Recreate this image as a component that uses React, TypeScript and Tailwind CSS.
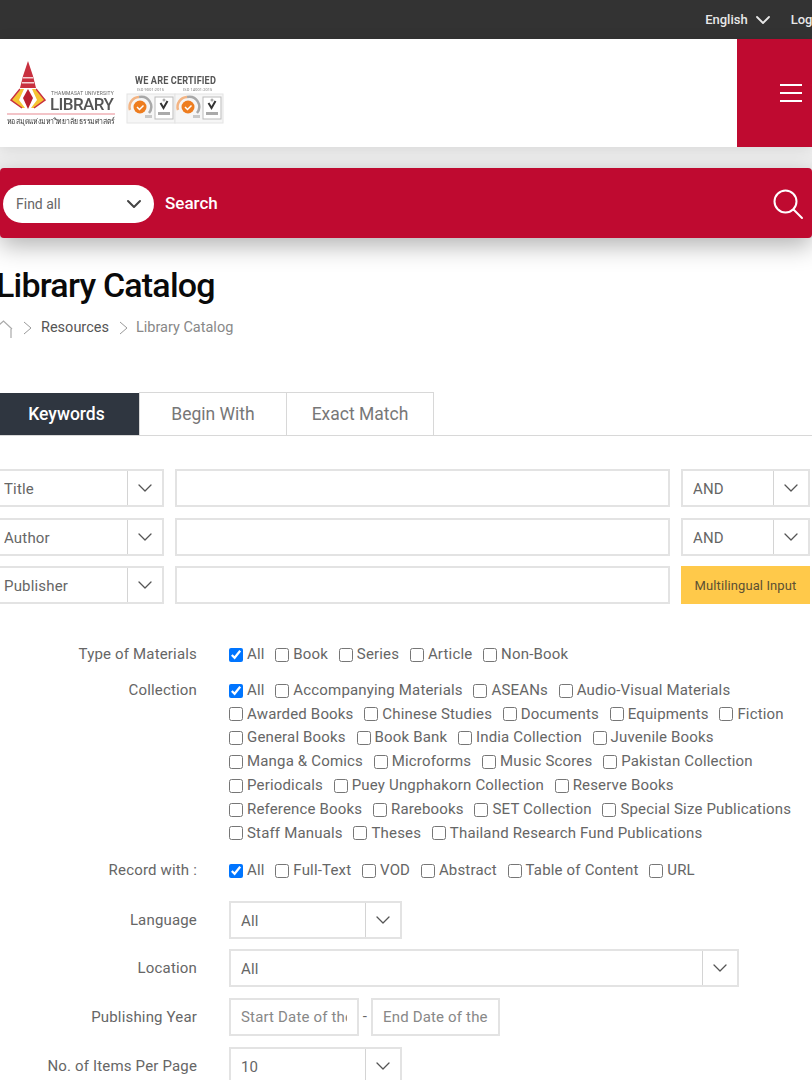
import { ChevronDown } from "lucide-react"

const TYPES = ["Book", "Series", "Article", "Non-Book"]
const RECORDS = ["Full-Text", "VOD", "Abstract", "Table of Content", "URL"]
const COLLECTIONS = [
  ["Awarded Books", "Chinese Studies", "Documents", "Equipments", "Fiction"],
  ["General Books", "Book Bank", "India Collection", "Juvenile Books"],
  ["Manga & Comics", "Microforms", "Music Scores", "Pakistan Collection"],
  ["Periodicals", "Puey Ungphakorn Collection", "Reserve Books"],
  ["Reference Books", "Rarebooks", "SET Collection", "Special Size Publications"],
  ["Staff Manuals", "Theses", "Thailand Research Fund Publications"],
]

function Check({ label, checked = false }: { label: string; checked?: boolean }) {
  return (
    <label className="flex items-center gap-[4px] whitespace-nowrap">
      <input type="checkbox" defaultChecked={checked} className="m-0 h-[14px] w-[14px] accent-[#0075ff]" />
      {label}
    </label>
  )
}

function Select({ label, className }: { label: string; className: string }) {
  return (
    <div className={`flex h-[38px] border-2 border-[#e3e3e3] bg-white ${className}`}>
      <span className="flex-1 truncate pt-[1px] leading-[34px]">{label}</span>
      <span className="flex w-[35px] items-center justify-center border-l border-[#d4d4d4]">
        <ChevronDown className="size-[24px] text-[#555]" strokeWidth={1.3} />
      </span>
    </div>
  )
}

function Badge({ x }: { x: number }) {
  return (
    <g transform={`translate(${x} 0)`}>
      <rect x="0" y="34" width="48" height="29" fill="#f6f6f6" stroke="#e4e4e4" />
      <path d="M12 37a10 10 0 0 1 10 16" fill="none" stroke="#a8a8a8" strokeWidth="2.500" />
      <path d="M12 37a10 10 0 0 0-9 13" fill="none" stroke="#f3b483" strokeWidth="2.500" />
      <circle cx="13" cy="47" r="6.500" fill="#ee7d1f" />
      <path d="M10 47l2.500 2.500 4-4" fill="none" stroke="#fff" strokeWidth="1.500" />
      <rect x="18" y="55" width="7" height="3" fill="#c9c9c9" />
      <rect x="28" y="37" width="18" height="22" fill="#fff" stroke="#bbb" />
      <circle cx="37" cy="40" r="1.500" fill="#aaa" />
      <path d="M33.500 43l3 5 4-7" fill="none" stroke="#333" strokeWidth="2" />
      <rect x="31" y="52" width="12" height="3" fill="#aaa" />
    </g>
  )
}

function Logo() {
  return (
    <svg width="228" height="70" viewBox="0 0 228 70" className="blur-[0.3px]">
      <path d="M28 1l5 15 2 8 1 4H20l1-4 2-8z" fill="#c8303f" />
      <path d="M23 17h10v1.500H23zM22 22h12v1.500H22z" fill="#f4d0d3" />
      <path d="M21 29L11 40l11 8h3l-6-8 5-11z" fill="#f6c431" />
      <path d="M35 29l10 11-11 8h-3l6-8-5-11z" fill="#f6c431" />
      <path d="M20 29L11 40l11 8M36 29l9 11-11 8" fill="none" stroke="#c8303f" strokeWidth="1.500" />
      <path d="M28 29l5 9-5 11-5-11z" fill="#b9202f" />
      <text x="51" y="35" fontSize="4.500" fill="#666" textLength="63" lengthAdjust="spacingAndGlyphs">THAMMASAT UNIVERSITY</text>
      <text x="50" y="50" fontSize="17" fontWeight="500" fill="#555" textLength="64">LIBRARY</text>
      <rect x="7" y="53" width="108" height="2" fill="#f3c4c8" />
      <text x="7" y="64" fontSize="8" fill="#333" textLength="108" lengthAdjust="spacingAndGlyphs">หอสมุดแห่งมหาวิทยาลัยธรรมศาสตร์</text>
      <text x="135" y="24" fontSize="10.500" fontWeight="700" fill="#555" textLength="81" lengthAdjust="spacingAndGlyphs">WE ARE CERTIFIED</text>
      <text x="137" y="31" fontSize="3.800" fill="#777">ISO 9001:2015</text>
      <text x="183" y="31" fontSize="3.800" fill="#777">ISO 14001:2015</text>
      <Badge x={127} />
      <Badge x={175} />
    </svg>
  )
}

function Row({ label, children, className = "", labelClass = "" }: { label: string; children: React.ReactNode; className?: string; labelClass?: string }) {
  return (
    <div className={`flex ${className}`}>
      <div className={`w-[197px] shrink-0 text-right ${labelClass}`}>{label}</div>
      <div className="ml-[32px] flex-1">{children}</div>
    </div>
  )
}

export default function App() {
  return (
    <div className="h-[1080px] w-[812px] overflow-hidden bg-white font-['Roboto',sans-serif] text-[15px] tracking-[0.17px] text-[#666]">
      {/* Top bar */}
      <div className="-mr-[11px] flex h-[39px] items-center justify-end gap-[16px] bg-[#333333] text-[13px] font-medium tracking-normal text-[#e8e8e8]">
        <span className="flex items-center gap-[3px]">
          English
          <ChevronDown className="size-[24px]" strokeWidth={1.8} />
        </span>
        <span>Login</span>
      </div>

      {/* Header */}
      <header className="relative z-10 flex h-[108px] items-center justify-between bg-white shadow-[0_2px_14px_rgba(0,0,0,0.1)]">
        <div className="mt-[4px]">
          <Logo />
        </div>
        <button className="flex h-full w-[75px] items-center justify-end bg-[#bf0a30] pr-[10px]">
          <span className="flex w-[22px] flex-col gap-[6px]">
            <span className="h-[2px] bg-white" />
            <span className="h-[2px] bg-white" />
            <span className="h-[2px] bg-white" />
          </span>
        </button>
      </header>

      {/* Search bar */}
      <div className="bg-[#eeeeee] pt-[21px]">
        <div className="relative z-[5] flex h-[70px] items-center justify-between rounded-[4px] bg-[#bf0a30] pl-[3px] pr-[8px] pt-[2px] tracking-normal shadow-[0_8px_24px_rgba(0,0,0,0.3)]">
          <div className="flex items-center">
            <div className="flex h-[38px] w-[151px] items-center justify-between rounded-full bg-white pl-[13px] pr-[8px] text-[14px] text-[#666]">
              Find all
              <ChevronDown className="size-[24px] text-[#444]" strokeWidth={2} />
            </div>
            <span className="-mt-[1px] ml-[11px] text-[17px] font-medium text-white">Search</span>
          </div>
          <svg width="32" height="32" viewBox="0 0 32 32" fill="none" stroke="white" strokeWidth="2">
            <circle cx="13.500" cy="13.500" r="11" />
            <path d="M21.500 21.500l8.500 8.500" strokeLinecap="round" />
          </svg>
        </div>
      </div>

      {/* Title */}
      <h1 className="-ml-[4px] mt-[25px] text-[34px] font-medium leading-[44px] tracking-[-0.8px] text-[#0a0a0a]">Library Catalog</h1>
      <nav className="mt-[11px] flex h-[20px] items-center text-[14.500px] tracking-normal">
        <svg width="13" height="18" viewBox="0 0 13 18" fill="none" stroke="#aaa" strokeWidth="1.200" className="mt-[2px]">
          <path d="M-2 6L3.500 1 12 9M11 9v9" />
        </svg>
        <svg width="10" height="14" viewBox="0 0 10 14" fill="none" stroke="#999" className="ml-[10px]">
          <path d="M1 1l7 6-7 6" />
        </svg>
        <span className="ml-[8px] text-[#555]">Resources</span>
        <svg width="10" height="14" viewBox="0 0 10 14" fill="none" stroke="#999" className="ml-[10px]">
          <path d="M1 1l7 6-7 6" />
        </svg>
        <span className="ml-[7px] text-[#888]">Library Catalog</span>
      </nav>

      {/* Tabs */}
      <div className="mt-[54px] flex h-[44px] border-b border-[#d8d8d8] text-[17.500px] tracking-normal">
        <div className="mt-[1px] flex w-[139px] items-center justify-center bg-[#2f3640] pr-[6px] pt-[1px] font-medium text-white">Keywords</div>
        <div className="flex w-[148px] items-center justify-center border-x border-t border-[#d8d8d8] pt-[1px] text-[#777]">Begin With</div>
        <div className="flex w-[147px] items-center justify-center border-r border-t border-[#d8d8d8] pt-[1px] text-[#777]">Exact Match</div>
      </div>

      {/* Keyword rows */}
      <div className="mt-[33px] flex flex-col gap-[10.500px]">
        {[
          { field: "Title", op: "AND" },
          { field: "Author", op: "AND" },
          { field: "Publisher", op: null },
        ].map((r) => (
          <div key={r.field} className="flex h-[38px] gap-[11px]">
            <Select label={r.field} className="-ml-[2px] w-[166px] pl-[4px]" />
            <div className="h-[38px] w-[495px] border-2 border-[#e3e3e3]" />
            {r.op ? (
              <Select label={r.op} className="w-[129px] pl-[10px]" />
            ) : (
              <div className="flex h-[38px] w-[129px] items-center justify-center bg-[#ffc94a] pt-[1px] text-[13px] tracking-[0.1px] text-[#5c5033]">Multilingual Input</div>
            )}
          </div>
        ))}
      </div>

      {/* Filters */}
      <div className="mt-[39px] leading-[23.800px]">
        <Row label="Type of Materials">
          <div className="flex gap-[10.750px]">
            <Check label="All" checked />
            {TYPES.map((t) => <Check key={t} label={t} />)}
          </div>
        </Row>
        <Row label="Collection" className="mt-[12px]">
          <div className="flex flex-col">
            <div className="flex gap-[10.750px]">
              <Check label="All" checked />
              <Check label="Accompanying Materials" />
              <Check label="ASEANs" />
              <Check label="Audio-Visual Materials" />
            </div>
            {COLLECTIONS.map((row) => (
              <div key={row[0]} className="flex gap-[10.750px]">
                {row.map((c) => <Check key={c} label={c} />)}
              </div>
            ))}
          </div>
        </Row>
        <Row label="Record with :" className="mt-[14px]">
          <div className="flex gap-[10.750px]">
            <Check label="All" checked />
            {RECORDS.map((t) => <Check key={t} label={t} />)}
          </div>
        </Row>

        <Row label="Language" className="mt-[18px] items-center" labelClass="pt-[2px]">
          <Select label="All" className="w-[173px] pl-[10px]" />
        </Row>
        <Row label="Location" className="mt-[10px] items-center" labelClass="pt-[2px]">
          <Select label="All" className="w-[510px] pl-[10px]" />
        </Row>
        <Row label="Publishing Year" className="mt-[11px] items-center" labelClass="pt-[2px]">
          <div className="flex items-center">
            <div className="h-[38px] w-[130px] overflow-hidden whitespace-nowrap border-2 border-[#e3e3e3] px-[10px] leading-[34px] text-[#888]">
              <div className="overflow-hidden">Start Date of the</div>
            </div>
            <span className="w-[12px] text-center">-</span>
            <div className="h-[38px] w-[129px] overflow-hidden whitespace-nowrap border-2 border-[#e3e3e3] pl-[10px] leading-[34px] text-[#888]">End Date of the</div>
          </div>
        </Row>
        <Row label="No. of Items Per Page" className="mt-[11px] items-center" labelClass="pt-[2px]">
          <Select label="10" className="w-[173px] pl-[10px]" />
        </Row>
      </div>
    </div>
  )
}
